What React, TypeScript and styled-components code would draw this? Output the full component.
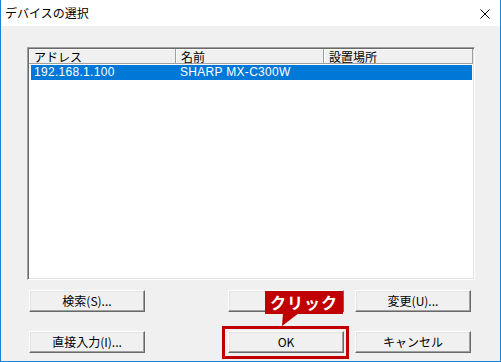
import React from "react";
import styled, { createGlobalStyle } from "styled-components";

const Global = createGlobalStyle`
  html, body { margin: 0; padding: 0; background: #f0f0f0; }
  * { box-sizing: border-box; }
`;

const Window = styled.div`
  width: 501px;
  height: 362px;
  border: 1px solid #1883d7;
  border-top: none;
  background: #f0f0f0;
  display: flex;
  flex-direction: column;
  font-family: "Liberation Sans", "Noto Sans CJK JP", sans-serif;
  font-size: 12px;
  color: #000;
`;

const TitleBar = styled.div`
  height: 26px;
  background: #fff;
  display: flex;
  align-items: center;
  justify-content: space-between;
  padding: 0 10px 0 4px;
  flex-shrink: 0;
`;

const Title = styled.span`
  font-family: "Noto Sans CJK JP", sans-serif;
  font-size: 12px;
  line-height: 14px;
  margin-top: -1px;
`;

const CloseIcon = styled.svg`
  width: 10px;
  height: 10px;
  margin-top: 1px;
`;

const Body = styled.div`
  padding: 21px 25px 0 26px;
  display: flex;
  flex-direction: column;
`;

const ListBox = styled.div`
  width: 448px;
  height: 233px;
  background: #fff;
  border: 1px solid;
  border-color: #a0a0a0 #ffffff #ffffff #a0a0a0;
  box-shadow: inset 1px 1px 0 #696969, inset -1px -1px 0 #e3e3e3;
  padding: 1px 2px 2px 1px;
  display: flex;
  flex-direction: column;
`;

const HeaderRow = styled.div`
  display: grid;
  grid-template-columns: 147px 148px 149px;
  height: 15px;
`;

const HeaderCell = styled.div`
  background: #f0f0f0;
  box-shadow: inset -1px -1px 0 #a0a0a0, inset 1px 1px 0 #ffffff;
  padding-left: 5px;
  height: 15px;
  display: flex;
  align-items: center;
  font-family: "Noto Sans CJK JP", sans-serif;
  font-size: 12px;
  line-height: 12px;
  white-space: nowrap;
`;

const DataRow = styled.div<{ $selected?: boolean }>`
  display: grid;
  grid-template-columns: 146px 148px 149px;
  height: 15px;
  margin: 1px 0 0 2px;
  background: ${(p) => (p.$selected ? "#0078d7" : "transparent")};
  color: ${(p) => (p.$selected ? "#fff" : "#000")};
`;

const DataCell = styled.div`
  padding-left: 3px;
  line-height: 15px;
  font-size: 12px;
  letter-spacing: 0.3px;
  white-space: nowrap;
`;

const ButtonArea = styled.div`
  position: relative;
  margin: 10px 0 0 2px;
  width: 442px;
  display: grid;
  grid-template-columns: 1fr 116px 116px;
  column-gap: 11px;
  row-gap: 19px;
`;

const Button = styled.div`
  width: 116px;
  height: 22px;
  background: #f0f0f0;
  border: 1px solid;
  border-color: #ffffff #696969 #696969 #ffffff;
  box-shadow: inset -1px -1px 0 #a0a0a0, inset 1px 1px 0 #e3e3e3;
  display: flex;
  align-items: center;
  justify-content: center;
  font-family: "Noto Sans CJK JP", sans-serif;
  font-size: 12px;
  line-height: 14px;
  position: relative;
`;

const Highlight = styled.div`
  position: absolute;
  left: -7px;
  top: -6px;
  width: 127px;
  height: 33px;
  border: 3px solid #c00000;
  pointer-events: none;
`;

const Callout = styled.div`
  position: absolute;
  left: 236px;
  top: 1px;
  width: 78px;
  height: 23px;
  background: #c00000;
  color: #fff;
  font-family: "Noto Sans CJK JP", sans-serif;
  font-weight: bold;
  font-size: 16px;
  line-height: 22px;
  text-align: center;
  letter-spacing: 1px;
`;

const Tail = styled.svg`
  position: absolute;
  left: 16px;
  top: 22px;
  width: 20px;
  height: 13px;
`;

export default function App() {
  return (
    <>
      <Global />
      <Window>
        <TitleBar>
          <Title>デバイスの選択</Title>
          <CloseIcon viewBox="0 0 10 10">
            <path d="M0.5 0.5 L9.5 9.5 M9.5 0.5 L0.5 9.5" stroke="#000" strokeWidth="1" fill="none" />
          </CloseIcon>
        </TitleBar>
        <Body>
          <ListBox>
            <HeaderRow>
              <HeaderCell>アドレス</HeaderCell>
              <HeaderCell>名前</HeaderCell>
              <HeaderCell>設置場所</HeaderCell>
            </HeaderRow>
            <DataRow $selected>
              <DataCell>192.168.1.100</DataCell>
              <DataCell>SHARP MX-C300W</DataCell>
              <DataCell></DataCell>
            </DataRow>
          </ListBox>
          <ButtonArea>
            <Button>検索(S)...</Button>
            <Button></Button>
            <Button>変更(U)...</Button>
            <Button>直接入力(I)...</Button>
            <Button>
              OK
              <Highlight />
            </Button>
            <Button>キャンセル</Button>
            <Callout>
              クリック
              <Tail viewBox="0 0 20 13">
                <path d="M2 0 L18 0 L1 13 Z" fill="#c00000" />
              </Tail>
            </Callout>
          </ButtonArea>
        </Body>
      </Window>
    </>
  );
}
